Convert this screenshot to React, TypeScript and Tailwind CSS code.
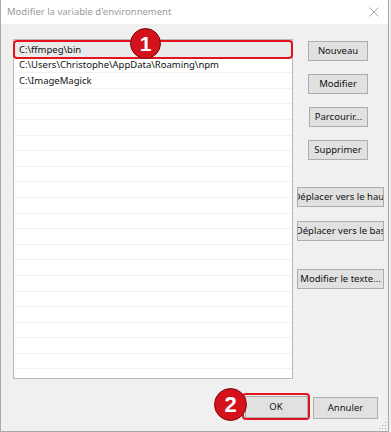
import React from "react";

const entries = ["C:\\ffmpeg\\bin", "C:\\Users\\Christophe\\AppData\\Roaming\\npm", "C:\\ImageMagick"];

const font = { fontFamily: '"Noto Sans", "Open Sans", sans-serif' };

function WinButton({ label, className }: { label: string; className: string }) {
  return (
    <div
      className={`flex items-center justify-center overflow-hidden whitespace-nowrap border border-[#adadad] bg-[#e1e1e1] text-[9.5px] leading-none text-[#111] ${className}`}
    >
      {label}
    </div>
  );
}

function Badge({ n, className }: { n: number; className: string }) {
  return (
    <div
      className={`absolute flex items-center justify-center rounded-full border border-[#7a0a0f] bg-[#d3121c] font-['Liberation_Sans',sans-serif] font-bold leading-none text-white ${className}`}
    >
      {n}
    </div>
  );
}

export default function App() {
  const rows = Array.from({ length: 22 }, (_, i) => entries[i] ?? "");

  return (
    <div className="relative flex h-[432px] w-[391px] flex-col bg-[#f0f0f0] pr-[2px]" style={font}>
      <div className="flex h-full flex-col border-x border-b border-[#a8a8a8]">
        {/* title bar */}
        <div className="flex h-[24px] shrink-0 items-center justify-between bg-white pl-[6px] pr-[9px]">
          <span className="text-[9.5px] text-[#9a9a9a]">Modifier la variable d'environnement</span>
          <svg width="10" height="10" viewBox="0 0 10 10">
            <path d="M0.5 0.5 L9.5 9.5 M9.5 0.5 L0.5 9.5" stroke="#a0a0a0" strokeWidth="0.9" />
          </svg>
        </div>

        <div className="flex flex-1 flex-col pl-[12px] pt-[15px]">
          <div className="flex">
            {/* list */}
            <div className="h-[340px] w-[280px] overflow-hidden border border-[#b9b9bd] bg-white pt-[2px]">
              {rows.map((text, i) => (
                <div
                  key={i}
                  className={`flex h-[15.6px] items-center border-b border-[#f1f1f1] pl-[5px] text-[9.5px] leading-none text-[#111] ${
                    i === 0 ? "bg-[#eaeaea]" : ""
                  }`}
                >
                  {text}
                </div>
              ))}
            </div>

            {/* side buttons */}
            <div className="flex flex-col pt-[2px]">
              <WinButton label="Nouveau" className="ml-[15px] h-[20px] w-[60px]" />
              <WinButton label="Modifier" className="ml-[15px] mt-[13px] h-[20px] w-[60px]" />
              <WinButton label="Parcourir..." className="ml-[16px] mt-[13px] h-[20px] w-[59px]" />
              <WinButton label="Supprimer" className="ml-[15px] mt-[13px] h-[20px] w-[60px]" />
              <WinButton label="Déplacer vers le haut" className="ml-[4px] mt-[27px] h-[20px] w-[87px]" />
              <WinButton label="Déplacer vers le bas" className="ml-[4px] mt-[14px] h-[20px] w-[87px]" />
              <WinButton label="Modifier le texte..." className="ml-[4px] mt-[28px] h-[20px] w-[87px]" />
            </div>
          </div>

          {/* bottom buttons */}
          <div className="mt-[14px] flex items-start pl-[229px]">
            <div className="rounded-[4px] border-[2.5px] border-[#e3141e] p-[0.5px]">
              <WinButton label="OK" className="h-[22px] w-[63px]" />
            </div>
            <WinButton label="Annuler" className="ml-[3px] mt-[4px] h-[22px] w-[65px]" />
          </div>
        </div>
      </div>

      {/* highlight around first entry */}
      <div className="pointer-events-none absolute left-[13px] top-[40px] h-[19px] w-[280px] rounded-[4px] border-[2.5px] border-[#e3141e]" />

      <Badge n={1} className="left-[130px] top-[28px] h-[31px] w-[31px] text-[21px]" />
      <Badge n={2} className="left-[214px] top-[388px] h-[33px] w-[33px] text-[22px]" />

      {/* resize grip */}
      <svg width="10" height="10" viewBox="0 0 10 10" className="absolute bottom-[2px] right-[4px]">
        {[
          [8, 2],
          [8, 5],
          [5, 5],
          [8, 8],
          [5, 8],
          [2, 8],
        ].map(([x, y], i) => (
          <rect key={i} x={x} y={y} width="1" height="1" fill="#9a9a9a" />
        ))}
      </svg>
    </div>
  );
}
